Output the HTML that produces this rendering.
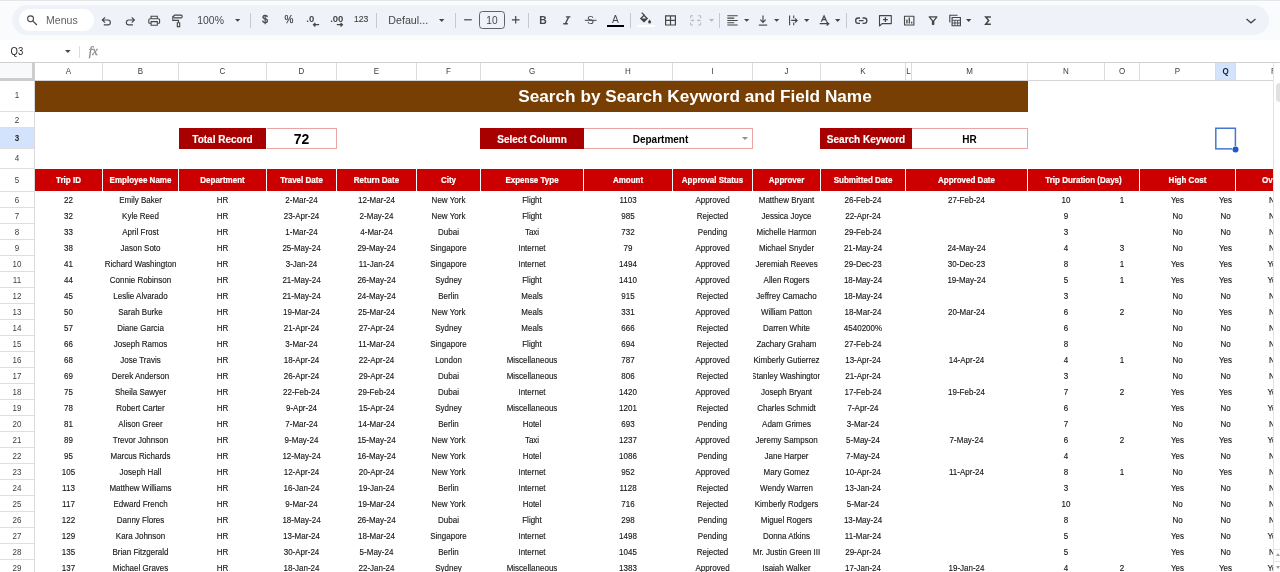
<!DOCTYPE html>
<html lang="en"><head><meta charset="utf-8"><title>Search by Search Keyword and Field Name</title>
<style>
html,body{margin:0;padding:0}
body{width:1280px;height:572px;overflow:hidden;position:relative;background:#fff;font-family:"Liberation Sans",Arial,sans-serif;color:#000}
.abs,.abs *{position:absolute}
#chrome{left:0;top:0;width:1280px;height:40px;background:#f9fbfd}
#topline{left:0;top:0;width:1280px;height:1px;background:#e4e6e9}
#tb{will-change:transform;left:12px;top:5px;width:1257px;height:30px;border-radius:15px;background:#eff3f9}
#menus{left:7px;top:4px;width:75px;height:22px;border-radius:11px;background:#fff}
.tt{font-size:10.5px;color:#444746;line-height:12px;white-space:nowrap}
.sep{width:1px;height:15px;top:8px;background:#c7c9cc}
svg{overflow:visible}
#fbar{will-change:transform;left:0;top:40px;width:1280px;height:22px;background:#fff}
#grid{will-change:transform;left:0;top:62px;width:1280px;height:510px;background:#fff;overflow:hidden}
.ch{top:1px;height:17px;font-size:8px;line-height:18px;color:#3c4043;text-align:center;border-right:1px solid #dcdcdc;background:#fff;box-sizing:content-box}
.rh span,.ch span{position:static;display:inline-block;transform:scaleY(1.1)}
.rh{left:0;width:34px;font-size:8px;color:#3c4043;text-align:center;border-bottom:1px solid #dedede;background:#fff}
.c{font-size:8px;line-height:16px;height:16px;text-align:center;white-space:nowrap;overflow:hidden;color:#161616;-webkit-text-stroke:0.12px #161616}
.c span{position:absolute;left:50%;top:0;transform:translateX(-50%) scaleY(1.12)}
.h{top:106.800px;height:22.600px;background:#cc0000;color:#fff;font-weight:bold;font-size:8px;line-height:23px;text-align:center;white-space:nowrap;overflow:hidden}
.h span{position:static;display:inline-block;transform:scaleY(1.14);-webkit-text-stroke:0.2px #fff}
.lab{top:65.600px;height:21.800px;background:#a80000;color:#fff;font-weight:bold;font-size:10px;line-height:23.800px;-webkit-text-stroke:0.150px #fff;text-align:center;white-space:nowrap}
.val{top:65.600px;height:19.800px;border:1px solid #eda3a3;border-left:none;background:#fff;color:#000;font-weight:bold;font-size:10px;line-height:21.800px;text-align:center;white-space:nowrap}
</style></head><body>

<div id="chrome" class="abs"><div id="topline"></div><div id="tb">
<div id="menus"></div>
<svg style="left:13.00px;top:9.00px" width="14.00" height="13.00" viewBox="25.00 14.00 14.00 13.00"><path d="M33.500 18.800a2.950 2.950 0 1 1 -5.900 0a2.950 2.950 0 1 1 5.900 0z" fill="none" stroke="#444746" stroke-width="1.05" /><path d="M32.700 20.900L36.900 25" fill="none" stroke="#444746" stroke-width="1.25" /></svg>
<div class="tt" style="left:34.00px;top:7.80px;line-height:14px;font-size:10.6px;font-weight:normal;color:#5f6368;">Menus</div>
<svg style="left:88.00px;top:10.00px" width="13.00" height="12.00" viewBox="100.00 15.00 13.00 12.00"><path d="M105 17.300L102.300 20L105 22.700M102.600 20H107.900a2.450 2.450 0 0 1 0 4.900H103.800" fill="none" stroke="#444746" stroke-width="1.15" /></svg>
<svg style="left:112.00px;top:10.00px" width="13.00" height="12.00" viewBox="124.00 15.00 13.00 12.00"><path d="M131.700 17.300L134.400 20L131.700 22.700M134.100 20H128.800a2.450 2.450 0 0 0 0 4.900H132.900" fill="none" stroke="#444746" stroke-width="1.15" /></svg>
<svg style="left:135.00px;top:9.00px" width="15.00" height="13.00" viewBox="147.00 14.00 15.00 13.00"><path d="M151.100 18.600V16.200H157.300V18.600" fill="none" stroke="#444746" stroke-width="1.1" /><path d="M150.900 23.300H149.600a0.800 0.800 0 0 1 -0.800 -0.800V19.900a1.200 1.200 0 0 1 1.200 -1.200H158.400a1.200 1.200 0 0 1 1.200 1.200V22.500a0.800 0.800 0 0 1 -0.800 0.800H157.500" fill="none" stroke="#444746" stroke-width="1.1" /><path d="M151.100 21.600H157.300V25.300H151.100z" fill="none" stroke="#444746" stroke-width="1.1" /></svg>
<svg style="left:159.00px;top:8.00px" width="14.00" height="16.00" viewBox="171.00 13.00 14.00 16.00"><path d="M174.600 15.100H181.200a0.900 0.900 0 0 1 0.900 0.900V17a0.900 0.900 0 0 1 -0.900 0.900H174.600a0.900 0.900 0 0 1 -0.900 -0.900V16a0.900 0.900 0 0 1 0.900 -0.900z" fill="none" stroke="#444746" stroke-width="1.1" /><path d="M173.700 16.500H172.800V20.400H178.500V22.600" fill="none" stroke="#444746" stroke-width="1.1" /><path d="M177.300 22.700H179.700V26.600H177.300z" fill="none" stroke="#444746" stroke-width="1.1" /></svg>
<div class="tt" style="left:185.30px;top:8.90px;line-height:14px;font-size:10.4px;font-weight:normal;color:#444746;">100%</div>
<svg style="left:222.60px;top:13.90px" width="5.30" height="2.95" viewBox="234.60 18.90 5.30 2.95"><path d="M234.6 18.9h5.300000000000011l-2.6500000000000057 2.850000000000006z" fill="#444746"/></svg>
<div class="sep" style="left:238.00px;top:7.5px"></div>
<div class="tt" style="left:203.10px;width:100px;text-align:center;top:7.60px;line-height:14px;font-size:10.4px;font-weight:normal;color:#444746;-webkit-text-stroke:0.4px #444746;">$</div>
<div class="tt" style="left:227.00px;width:100px;text-align:center;top:7.80px;line-height:14px;font-size:10px;font-weight:normal;color:#444746;-webkit-text-stroke:0.25px #444746;">%</div>
<div class="tt" style="left:294.30px;top:7.20px;line-height:14px;font-size:9.5px;font-weight:bold;color:#444746;">.0</div>
<svg style="left:300.00px;top:17.00px" width="8.00" height="5.00" viewBox="312.00 22.00 8.00 5.00"><path d="M319.100 24.700H313.600M315.400 22.900L313.500 24.700L315.400 26.500" fill="none" stroke="#444746" stroke-width="1.25" /></svg>
<div class="tt" style="left:318.20px;top:7.20px;line-height:14px;font-size:9.5px;font-weight:bold;color:#444746;">.00</div>
<svg style="left:324.00px;top:17.00px" width="8.00" height="5.00" viewBox="336.00 22.00 8.00 5.00"><path d="M336.800 24.700H342.300M340.500 22.900L342.400 24.700L340.500 26.500" fill="none" stroke="#444746" stroke-width="1.25" /></svg>
<div class="tt" style="left:299.20px;width:100px;text-align:center;top:7.40px;line-height:14px;font-size:8.6px;font-weight:normal;color:#444746;-webkit-text-stroke:0.15px #444746;">123</div>
<div class="sep" style="left:363.80px;top:7.5px"></div>
<div class="tt" style="left:376.30px;top:7.80px;line-height:14px;font-size:10.7px;font-weight:normal;color:#444746;">Defaul...</div>
<svg style="left:426.90px;top:13.60px" width="5.40" height="3.00" viewBox="438.90 18.60 5.40 3.00"><path d="M438.9 18.6h5.400000000000034l-2.700000000000017 2.9000000000000172z" fill="#444746"/></svg>
<div class="sep" style="left:443.10px;top:7.5px"></div>
<svg style="left:451.00px;top:13.00px" width="10.00" height="4.00" viewBox="463.00 18.00 10.00 4.00"><path d="M464.100 19.800H471.800" fill="none" stroke="#444746" stroke-width="1.2" /></svg>
<div style="left:467.20px;top:6.30px;width:25.6px;height:18px;border:1px solid #5f6368;border-radius:3.5px;box-sizing:border-box"></div>
<div class="tt" style="left:429.90px;width:100px;text-align:center;top:8.50px;line-height:14px;font-size:10.2px;font-weight:normal;color:#444746;">10</div>
<svg style="left:498.00px;top:10.00px" width="11.00" height="10.00" viewBox="510.00 15.00 11.00 10.00"><path d="M511.900 19.800H519.500M515.700 16V23.600" fill="none" stroke="#444746" stroke-width="1.2" /></svg>
<div class="sep" style="left:516.00px;top:7.5px"></div>
<div class="tt" style="left:480.90px;width:100px;text-align:center;top:8.60px;line-height:14px;font-size:10.4px;font-weight:bold;color:#444746;">B</div>
<svg style="left:550.00px;top:10.00px" width="10.00" height="11.00" viewBox="562.00 15.00 10.00 11.00"><path d="M565.900 16.900H570.400M563.300 23.700H567.800M568.700 16.900L565.400 23.700" fill="none" stroke="#444746" stroke-width="1.35" /></svg>
<div class="tt" style="left:528.60px;width:100px;text-align:center;top:8.20px;line-height:14px;font-size:10.5px;font-weight:normal;color:#444746;">S</div>
<svg style="left:572.00px;top:14.00px" width="14.00" height="3.00" viewBox="584.00 19.00 14.00 3.00"><path d="M584.800 20.300H596.500" fill="none" stroke="#444746" stroke-width="1.0" /></svg>
<div class="tt" style="left:553.30px;width:100px;text-align:center;top:7.70px;line-height:14px;font-size:10.2px;font-weight:normal;color:#444746;">A</div>
<div style="left:595.00px;top:19.60px;width:16.5px;height:2.4px;background:#000"></div>
<div class="sep" style="left:617.90px;top:7.5px"></div>
<svg style="left:626.00px;top:6.00px" width="18.00" height="13.00" viewBox="638.00 11.00 18.00 13.00"><path d="M644 14.500L648.100 18.600L644.600 22.100a0.850 0.850 0 0 1 -1.200 0L639.900 18.600z" fill="#444746"/><path d="M644 16.300L646.100 18.400H641.900z" fill="#eff3f9"/><path d="M641.700 12.600L644.600 15.500" fill="none" stroke="#444746" stroke-width="1.2" /><path d="M649.600 19.500c0.900 1.100 1.500 1.900 1.500 2.500a1.500 1.500 0 0 1 -3 0c0 -0.600 0.600 -1.400 1.500 -2.500z" fill="#444746"/></svg>
<div style="left:625.00px;top:19.70px;width:18px;height:2.1px;background:#fff"></div>
<svg style="left:652.00px;top:9.00px" width="14.00" height="13.00" viewBox="664.00 14.00 14.00 13.00"><path d="M665.600 15.850H675.400V25H665.600zM670.500 15.850V25M665.600 20.400H675.400" fill="none" stroke="#444746" stroke-width="1.2" /></svg>
<svg style="left:677.00px;top:9.00px" width="14.00" height="13.00" viewBox="689.00 14.00 14.00 13.00"><path d="M693 15.800H690.600V18.300M698.300 15.800H700.700V18.300M693 25H690.600V22.500M698.300 25H700.700V22.500" fill="none" stroke="#b4b7ba" stroke-width="1.0" /><path d="M690.600 20.400H693.800M692.600 19.200L693.800 20.400L692.600 21.600M700.700 20.400H697.500M698.700 19.200L697.500 20.400L698.700 21.600" fill="none" stroke="#b4b7ba" stroke-width="0.9" /></svg>
<svg style="left:696.80px;top:13.70px" width="5.20" height="2.90" viewBox="708.80 18.70 5.20 2.90"><path d="M708.8 18.7h5.2000000000000455l-2.6000000000000227 2.800000000000023z" fill="#b4b7ba"/></svg>
<div class="sep" style="left:706.90px;top:7.5px"></div>
<svg style="left:714.00px;top:9.00px" width="13.00" height="13.00" viewBox="726.00 14.00 13.00 13.00"><path d="M727.300 15.800H737.700M727.300 18.100H734.300M727.300 20.400H737.700M727.300 22.700H734.300M727.300 25H737.700" fill="none" stroke="#444746" stroke-width="1.05" /></svg>
<svg style="left:731.50px;top:13.70px" width="5.30" height="2.95" viewBox="743.50 18.70 5.30 2.95"><path d="M743.5 18.7h5.2999999999999545l-2.6499999999999773 2.8499999999999774z" fill="#444746"/></svg>
<svg style="left:745.00px;top:9.00px" width="12.00" height="13.00" viewBox="757.00 14.00 12.00 13.00"><path d="M763 15.400V22.200M760.300 19.700L763 22.400L765.700 19.700" fill="none" stroke="#444746" stroke-width="1.15" /><path d="M758.800 25.100H767.200" fill="none" stroke="#444746" stroke-width="1.15" /></svg>
<svg style="left:761.50px;top:13.70px" width="5.30" height="2.95" viewBox="773.50 18.70 5.30 2.95"><path d="M773.5 18.7h5.2999999999999545l-2.6499999999999773 2.8499999999999774z" fill="#444746"/></svg>
<svg style="left:776.00px;top:9.00px" width="11.00" height="13.00" viewBox="788.00 14.00 11.00 13.00"><path d="M789.600 15.600V25.200M793.700 15.600V18.200M793.700 22.600V25.200" fill="none" stroke="#444746" stroke-width="1.1" /><path d="M791.200 20.400H797M795 18.300L797.200 20.400L795 22.500" fill="none" stroke="#444746" stroke-width="1.1" /></svg>
<svg style="left:792.00px;top:13.70px" width="5.40" height="3.00" viewBox="804.00 18.70 5.40 3.00"><path d="M804 18.7h5.399999999999977l-2.6999999999999886 2.899999999999989z" fill="#444746"/></svg>
<svg style="left:807.00px;top:9.00px" width="11.00" height="9.00" viewBox="819.00 14.00 11.00 9.00"><path d="M821.300 21.700L824.050 15.900L826.800 21.700M822.400 19.700H825.700" fill="none" stroke="#444746" stroke-width="1.2" stroke-linejoin="miter"/></svg>
<svg style="left:806.00px;top:17.00px" width="13.00" height="5.00" viewBox="818.00 22.00 13.00 5.00"><path d="M819.700 23.600H828.400M826.700 22L828.700 23.800L826.700 25.500" fill="none" stroke="#444746" stroke-width="1.25" /></svg>
<svg style="left:823.20px;top:13.70px" width="5.40" height="3.00" viewBox="835.20 18.70 5.40 3.00"><path d="M835.2 18.7h5.399999999999977l-2.6999999999999886 2.899999999999989z" fill="#444746"/></svg>
<div class="sep" style="left:834.40px;top:7.5px"></div>
<svg style="left:842.00px;top:11.00px" width="15.00" height="9.00" viewBox="854.00 16.00 15.00 9.00"><path d="M860 18H858.300a2.650 2.650 0 0 0 0 5.300H860M862.500 18H864.200a2.650 2.650 0 0 1 0 5.300H862.500M858.900 20.650H863.600" fill="none" stroke="#444746" stroke-width="1.3" /></svg>
<svg style="left:866.00px;top:9.00px" width="15.00" height="14.00" viewBox="878.00 14.00 15.00 14.00"><path d="M879.500 15.600H891.300V23.600H882.100L879.500 26V15.600z" fill="none" stroke="#444746" stroke-width="1.1" stroke-linejoin="round"/><path d="M885.400 17.300V22M883 19.650H887.800" fill="none" stroke="#444746" stroke-width="1.3" /></svg>
<svg style="left:891.00px;top:10.00px" width="13.00" height="12.00" viewBox="903.00 15.00 13.00 12.00"><path d="M904.500 16.250H913.900V25H904.500z" fill="none" stroke="#444746" stroke-width="1.1" stroke-linejoin="round"/><path d="M906.900 23.500V19.600M909.300 23.500V17.500M911.700 23.500V21.800" fill="none" stroke="#444746" stroke-width="1.3" /></svg>
<svg style="left:915.00px;top:10.00px" width="12.00" height="11.00" viewBox="927.00 15.00 12.00 11.00"><path d="M929.300 16.800H936.900L933.700 20.800V24.300H932.500V20.800L929.300 16.800z" fill="none" stroke="#444746" stroke-width="1.3" stroke-linejoin="round"/></svg>
<svg style="left:936.00px;top:8.00px" width="15.00" height="15.00" viewBox="948.00 13.00 15.00 15.00"><path d="M949.800 22.600V15.200H957.600" fill="none" stroke="#444746" stroke-width="1.1" /><path d="M952.100 17.500H960.400V25.700H952.100z" fill="none" stroke="#444746" stroke-width="1.15" /><path d="M952.100 20.300H960.400M952.100 23H960.400M954.900 20.300V25.700M957.700 20.300V25.700" fill="none" stroke="#444746" stroke-width="0.9" /></svg>
<svg style="left:954.40px;top:13.70px" width="5.40" height="3.00" viewBox="966.40 18.70 5.40 3.00"><path d="M966.4 18.7h5.399999999999977l-2.6999999999999886 2.899999999999989z" fill="#444746"/></svg>
<svg style="left:971.00px;top:10.00px" width="10.00" height="11.00" viewBox="983.00 15.00 10.00 11.00"><path d="M990.900 17H985.700L988.700 20.600L985.700 24.200H990.900" fill="none" stroke="#444746" stroke-width="1.5" stroke-linejoin="miter"/></svg>
<svg style="left:1233.00px;top:12.00px" width="13.00" height="8.00" viewBox="1245.00 17.00 13.00 8.00"><path d="M1246.500 19L1251 22.800L1255.500 19" fill="none" stroke="#444746" stroke-width="1.3" /></svg>
</div></div>
<div id="fbar" class="abs">
<div style="left:10.500px;top:6.100px;font-size:9.500px;line-height:12px;color:#202124;transform:scaleY(1.13);transform-origin:50% 50%">Q3</div>
<svg style="left:64.900px;top:10.300px" width="5.600" height="3" viewBox="0 0 5.600 3"><path d="M0 0h5.600L2.800 3z" fill="#444746"/></svg>
<div style="left:79px;top:6px;width:1px;height:12px;background:#dadce0"></div>
<div style="left:88.700px;top:3.900px;font-family:'Liberation Serif',serif;font-style:italic;font-size:12.500px;line-height:15px;color:#858a8f;letter-spacing:0.200px;-webkit-text-stroke:0.300px #858a8f">fx</div>
</div>
<div id="grid" class="abs">
<div style="left:0;top:0;width:1280px;height:1px;background:#d0d0d0"></div>
<div class="ch" style="left:35px;width:67px;"><span>A</span></div>
<div class="ch" style="left:103px;width:75px;"><span>B</span></div>
<div class="ch" style="left:179px;width:87px;"><span>C</span></div>
<div class="ch" style="left:267px;width:69px;"><span>D</span></div>
<div class="ch" style="left:337px;width:79px;"><span>E</span></div>
<div class="ch" style="left:417px;width:63px;"><span>F</span></div>
<div class="ch" style="left:481px;width:102px;"><span>G</span></div>
<div class="ch" style="left:584px;width:88px;"><span>H</span></div>
<div class="ch" style="left:673px;width:79px;"><span>I</span></div>
<div class="ch" style="left:753px;width:67px;"><span>J</span></div>
<div class="ch" style="left:821px;width:84px;"><span>K</span></div>
<div class="ch" style="left:906px;width:5px;"><span>L</span></div>
<div class="ch" style="left:912px;width:115px;"><span>M</span></div>
<div class="ch" style="left:1028px;width:76px;"><span>N</span></div>
<div class="ch" style="left:1105px;width:34px;"><span>O</span></div>
<div class="ch" style="left:1140px;width:75px;"><span>P</span></div>
<div class="ch" style="left:1216px;width:19px;background:#d3e3fd;color:#1f1f1f;font-weight:bold;"><span>Q</span></div>
<div class="ch" style="left:1236px;width:76px;"><span>R</span></div>
<div style="left:0;top:18px;width:1280px;height:1px;background:#d5d5d5"></div>
<div style="left:0;top:1px;width:32px;height:15px;background:#f8f9fa;border-right:3px solid #cdcdcd;border-bottom:3px solid #cdcdcd"></div>
<div class="rh" style="top:19px;height:30px;"><span style="position:absolute;left:0;width:34px;top:9.0px;line-height:12px;height:12px">1</span></div>
<div class="rh" style="top:50px;height:15px;"><span style="position:absolute;left:0;width:34px;top:2.5px;line-height:12px;height:12px">2</span></div>
<div class="rh" style="top:66px;height:20px;background:#d3e3fd;color:#1f1f1f;font-weight:bold;"><span style="position:absolute;left:0;width:34px;top:5.0px;line-height:12px;height:12px">3</span></div>
<div class="rh" style="top:87px;height:19px;"><span style="position:absolute;left:0;width:34px;top:3.5px;line-height:12px;height:12px">4</span></div>
<div class="rh" style="top:107px;height:22px;"><span style="position:absolute;left:0;width:34px;top:6.0px;line-height:12px;height:12px">5</span></div>
<div class="rh" style="top:130px;height:15px;border-bottom:none;"><span style="position:absolute;left:0;width:34px;top:2.5px;line-height:12px;height:12px">6</span></div>
<div class="rh" style="top:146px;height:15px;border-bottom:none;"><span style="position:absolute;left:0;width:34px;top:2.5px;line-height:12px;height:12px">7</span></div>
<div class="rh" style="top:162px;height:15px;border-bottom:none;"><span style="position:absolute;left:0;width:34px;top:2.5px;line-height:12px;height:12px">8</span></div>
<div class="rh" style="top:178px;height:15px;border-bottom:none;"><span style="position:absolute;left:0;width:34px;top:2.5px;line-height:12px;height:12px">9</span></div>
<div class="rh" style="top:194px;height:15px;border-bottom:none;"><span style="position:absolute;left:0;width:34px;top:2.5px;line-height:12px;height:12px">10</span></div>
<div class="rh" style="top:210px;height:15px;border-bottom:none;"><span style="position:absolute;left:0;width:34px;top:2.5px;line-height:12px;height:12px">11</span></div>
<div class="rh" style="top:226px;height:15px;border-bottom:none;"><span style="position:absolute;left:0;width:34px;top:2.5px;line-height:12px;height:12px">12</span></div>
<div class="rh" style="top:242px;height:15px;border-bottom:none;"><span style="position:absolute;left:0;width:34px;top:2.5px;line-height:12px;height:12px">13</span></div>
<div class="rh" style="top:258px;height:15px;border-bottom:none;"><span style="position:absolute;left:0;width:34px;top:2.5px;line-height:12px;height:12px">14</span></div>
<div class="rh" style="top:274px;height:15px;border-bottom:none;"><span style="position:absolute;left:0;width:34px;top:2.5px;line-height:12px;height:12px">15</span></div>
<div class="rh" style="top:290px;height:15px;border-bottom:none;"><span style="position:absolute;left:0;width:34px;top:2.5px;line-height:12px;height:12px">16</span></div>
<div class="rh" style="top:306px;height:15px;border-bottom:none;"><span style="position:absolute;left:0;width:34px;top:2.5px;line-height:12px;height:12px">17</span></div>
<div class="rh" style="top:322px;height:15px;border-bottom:none;"><span style="position:absolute;left:0;width:34px;top:2.5px;line-height:12px;height:12px">18</span></div>
<div class="rh" style="top:338px;height:15px;border-bottom:none;"><span style="position:absolute;left:0;width:34px;top:2.5px;line-height:12px;height:12px">19</span></div>
<div class="rh" style="top:354px;height:15px;border-bottom:none;"><span style="position:absolute;left:0;width:34px;top:2.5px;line-height:12px;height:12px">20</span></div>
<div class="rh" style="top:370px;height:15px;border-bottom:none;"><span style="position:absolute;left:0;width:34px;top:2.5px;line-height:12px;height:12px">21</span></div>
<div class="rh" style="top:386px;height:15px;border-bottom:none;"><span style="position:absolute;left:0;width:34px;top:2.5px;line-height:12px;height:12px">22</span></div>
<div class="rh" style="top:402px;height:15px;border-bottom:none;"><span style="position:absolute;left:0;width:34px;top:2.5px;line-height:12px;height:12px">23</span></div>
<div class="rh" style="top:418px;height:15px;border-bottom:none;"><span style="position:absolute;left:0;width:34px;top:2.5px;line-height:12px;height:12px">24</span></div>
<div class="rh" style="top:434px;height:15px;border-bottom:none;"><span style="position:absolute;left:0;width:34px;top:2.5px;line-height:12px;height:12px">25</span></div>
<div class="rh" style="top:450px;height:15px;border-bottom:none;"><span style="position:absolute;left:0;width:34px;top:2.5px;line-height:12px;height:12px">26</span></div>
<div class="rh" style="top:466px;height:15px;border-bottom:none;"><span style="position:absolute;left:0;width:34px;top:2.5px;line-height:12px;height:12px">27</span></div>
<div class="rh" style="top:482px;height:15px;border-bottom:none;"><span style="position:absolute;left:0;width:34px;top:2.5px;line-height:12px;height:12px">28</span></div>
<div class="rh" style="top:498px;height:15px;border-bottom:none;"><span style="position:absolute;left:0;width:34px;top:2.5px;line-height:12px;height:12px">29</span></div>
<div style="left:0;top:145px;width:34px;height:1px;background:#dedede"></div>
<div style="left:0;top:161px;width:34px;height:1px;background:#dedede"></div>
<div style="left:0;top:177px;width:34px;height:1px;background:#dedede"></div>
<div style="left:0;top:193px;width:34px;height:1px;background:#dedede"></div>
<div style="left:0;top:209px;width:34px;height:1px;background:#dedede"></div>
<div style="left:0;top:225px;width:34px;height:1px;background:#dedede"></div>
<div style="left:0;top:241px;width:34px;height:1px;background:#dedede"></div>
<div style="left:0;top:257px;width:34px;height:1px;background:#dedede"></div>
<div style="left:0;top:273px;width:34px;height:1px;background:#dedede"></div>
<div style="left:0;top:289px;width:34px;height:1px;background:#dedede"></div>
<div style="left:0;top:305px;width:34px;height:1px;background:#dedede"></div>
<div style="left:0;top:321px;width:34px;height:1px;background:#dedede"></div>
<div style="left:0;top:337px;width:34px;height:1px;background:#dedede"></div>
<div style="left:0;top:353px;width:34px;height:1px;background:#dedede"></div>
<div style="left:0;top:369px;width:34px;height:1px;background:#dedede"></div>
<div style="left:0;top:385px;width:34px;height:1px;background:#dedede"></div>
<div style="left:0;top:401px;width:34px;height:1px;background:#dedede"></div>
<div style="left:0;top:417px;width:34px;height:1px;background:#dedede"></div>
<div style="left:0;top:433px;width:34px;height:1px;background:#dedede"></div>
<div style="left:0;top:449px;width:34px;height:1px;background:#dedede"></div>
<div style="left:0;top:465px;width:34px;height:1px;background:#dedede"></div>
<div style="left:0;top:481px;width:34px;height:1px;background:#dedede"></div>
<div style="left:0;top:497px;width:34px;height:1px;background:#dedede"></div>
<div style="left:0;top:513px;width:34px;height:1px;background:#dedede"></div>
<div style="left:34px;top:19px;width:1px;height:500px;background:#d9d9d9"></div>
<div style="left:35px;top:19px;width:993px;height:31px;background:#783f04"></div>
<div style="left:395px;top:19px;width:600px;height:31px;line-height:31px;text-align:center;color:#fff;font-weight:bold;font-size:17.2px;white-space:nowrap">Search by Search Keyword and Field Name</div>
<div class="lab" style="left:178.7px;width:87.6px">Total Record</div>
<div class="val" style="left:267px;width:69px;font-size:14px;">72</div>
<div class="lab" style="left:480.1px;width:103.9px">Select Column</div>
<div class="val" style="left:584px;width:168px;"><span style="left:0;width:153px;top:0">Department</span><svg style="left:158px;top:8px" width="6" height="3" viewBox="0 0 6 3"><path d="M0 0h6L3 3z" fill="#8a8d91"/></svg></div>
<div class="lab" style="left:820.2px;width:91.7px">Search Keyword</div>
<div class="val" style="left:912px;width:115px;">HR</div>
<div class="h" style="left:35px;width:67px"><span>Trip ID</span></div>
<div class="h" style="left:103px;width:75px"><span>Employee Name</span></div>
<div class="h" style="left:179px;width:87px"><span>Department</span></div>
<div class="h" style="left:267px;width:69px"><span>Travel Date</span></div>
<div class="h" style="left:337px;width:79px"><span>Return Date</span></div>
<div class="h" style="left:417px;width:63px"><span>City</span></div>
<div class="h" style="left:481px;width:102px"><span>Expense Type</span></div>
<div class="h" style="left:584px;width:88px"><span>Amount</span></div>
<div class="h" style="left:673px;width:79px"><span>Approval Status</span></div>
<div class="h" style="left:753px;width:67px"><span>Approver</span></div>
<div class="h" style="left:821px;width:84px"><span>Submitted Date</span></div>
<div class="h" style="left:906px;width:121px"><span>Approved Date</span></div>
<div class="h" style="left:1028px;width:111px"><span>Trip Duration (Days)</span></div>
<div class="h" style="left:1140px;width:95px"><span>High Cost</span></div>
<div class="h" style="left:1236px;width:80px;text-align:left"><span style="position:absolute;left:26px;top:0">Over Budget</span></div>
<div class="c" style="left:35px;top:130.5px;width:67px"><span>22</span></div>
<div class="c" style="left:103px;top:130.5px;width:75px"><span>Emily Baker</span></div>
<div class="c" style="left:179px;top:130.5px;width:87px"><span>HR</span></div>
<div class="c" style="left:267px;top:130.5px;width:69px"><span>2-Mar-24</span></div>
<div class="c" style="left:337px;top:130.5px;width:79px"><span>12-Mar-24</span></div>
<div class="c" style="left:417px;top:130.5px;width:63px"><span>New York</span></div>
<div class="c" style="left:481px;top:130.5px;width:102px"><span>Flight</span></div>
<div class="c" style="left:584px;top:130.5px;width:88px"><span>1103</span></div>
<div class="c" style="left:673px;top:130.5px;width:79px"><span>Approved</span></div>
<div class="c" style="left:753px;top:130.5px;width:67px"><span>Matthew Bryant</span></div>
<div class="c" style="left:821px;top:130.5px;width:84px"><span>26-Feb-24</span></div>
<div class="c" style="left:906px;top:130.5px;width:121px"><span>27-Feb-24</span></div>
<div class="c" style="left:1028px;top:130.5px;width:76px"><span>10</span></div>
<div class="c" style="left:1105px;top:130.5px;width:34px"><span>1</span></div>
<div class="c" style="left:1140px;top:130.5px;width:75px"><span>Yes</span></div>
<div class="c" style="left:1216px;top:130.5px;width:19px"><span>Yes</span></div>
<div class="c" style="left:1236px;top:130.5px;width:76px"><span>No</span></div>
<div class="c" style="left:35px;top:146.5px;width:67px"><span>32</span></div>
<div class="c" style="left:103px;top:146.5px;width:75px"><span>Kyle Reed</span></div>
<div class="c" style="left:179px;top:146.5px;width:87px"><span>HR</span></div>
<div class="c" style="left:267px;top:146.5px;width:69px"><span>23-Apr-24</span></div>
<div class="c" style="left:337px;top:146.5px;width:79px"><span>2-May-24</span></div>
<div class="c" style="left:417px;top:146.5px;width:63px"><span>New York</span></div>
<div class="c" style="left:481px;top:146.5px;width:102px"><span>Flight</span></div>
<div class="c" style="left:584px;top:146.5px;width:88px"><span>985</span></div>
<div class="c" style="left:673px;top:146.5px;width:79px"><span>Rejected</span></div>
<div class="c" style="left:753px;top:146.5px;width:67px"><span>Jessica Joyce</span></div>
<div class="c" style="left:821px;top:146.5px;width:84px"><span>22-Apr-24</span></div>
<div class="c" style="left:1028px;top:146.5px;width:76px"><span>9</span></div>
<div class="c" style="left:1140px;top:146.5px;width:75px"><span>No</span></div>
<div class="c" style="left:1216px;top:146.5px;width:19px"><span>No</span></div>
<div class="c" style="left:1236px;top:146.5px;width:76px"><span>No</span></div>
<div class="c" style="left:35px;top:162.5px;width:67px"><span>33</span></div>
<div class="c" style="left:103px;top:162.5px;width:75px"><span>April Frost</span></div>
<div class="c" style="left:179px;top:162.5px;width:87px"><span>HR</span></div>
<div class="c" style="left:267px;top:162.5px;width:69px"><span>1-Mar-24</span></div>
<div class="c" style="left:337px;top:162.5px;width:79px"><span>4-Mar-24</span></div>
<div class="c" style="left:417px;top:162.5px;width:63px"><span>Dubai</span></div>
<div class="c" style="left:481px;top:162.5px;width:102px"><span>Taxi</span></div>
<div class="c" style="left:584px;top:162.5px;width:88px"><span>732</span></div>
<div class="c" style="left:673px;top:162.5px;width:79px"><span>Pending</span></div>
<div class="c" style="left:753px;top:162.5px;width:67px"><span>Michelle Harmon</span></div>
<div class="c" style="left:821px;top:162.5px;width:84px"><span>29-Feb-24</span></div>
<div class="c" style="left:1028px;top:162.5px;width:76px"><span>3</span></div>
<div class="c" style="left:1140px;top:162.5px;width:75px"><span>No</span></div>
<div class="c" style="left:1216px;top:162.5px;width:19px"><span>No</span></div>
<div class="c" style="left:1236px;top:162.5px;width:76px"><span>No</span></div>
<div class="c" style="left:35px;top:178.5px;width:67px"><span>38</span></div>
<div class="c" style="left:103px;top:178.5px;width:75px"><span>Jason Soto</span></div>
<div class="c" style="left:179px;top:178.5px;width:87px"><span>HR</span></div>
<div class="c" style="left:267px;top:178.5px;width:69px"><span>25-May-24</span></div>
<div class="c" style="left:337px;top:178.5px;width:79px"><span>29-May-24</span></div>
<div class="c" style="left:417px;top:178.5px;width:63px"><span>Singapore</span></div>
<div class="c" style="left:481px;top:178.5px;width:102px"><span>Internet</span></div>
<div class="c" style="left:584px;top:178.5px;width:88px"><span>79</span></div>
<div class="c" style="left:673px;top:178.5px;width:79px"><span>Approved</span></div>
<div class="c" style="left:753px;top:178.5px;width:67px"><span>Michael Snyder</span></div>
<div class="c" style="left:821px;top:178.5px;width:84px"><span>21-May-24</span></div>
<div class="c" style="left:906px;top:178.5px;width:121px"><span>24-May-24</span></div>
<div class="c" style="left:1028px;top:178.5px;width:76px"><span>4</span></div>
<div class="c" style="left:1105px;top:178.5px;width:34px"><span>3</span></div>
<div class="c" style="left:1140px;top:178.5px;width:75px"><span>No</span></div>
<div class="c" style="left:1216px;top:178.5px;width:19px"><span>Yes</span></div>
<div class="c" style="left:1236px;top:178.5px;width:76px"><span>No</span></div>
<div class="c" style="left:35px;top:194.5px;width:67px"><span>41</span></div>
<div class="c" style="left:103px;top:194.5px;width:75px"><span>Richard Washington</span></div>
<div class="c" style="left:179px;top:194.5px;width:87px"><span>HR</span></div>
<div class="c" style="left:267px;top:194.5px;width:69px"><span>3-Jan-24</span></div>
<div class="c" style="left:337px;top:194.5px;width:79px"><span>11-Jan-24</span></div>
<div class="c" style="left:417px;top:194.5px;width:63px"><span>Singapore</span></div>
<div class="c" style="left:481px;top:194.5px;width:102px"><span>Internet</span></div>
<div class="c" style="left:584px;top:194.5px;width:88px"><span>1494</span></div>
<div class="c" style="left:673px;top:194.5px;width:79px"><span>Approved</span></div>
<div class="c" style="left:753px;top:194.5px;width:67px"><span>Jeremiah Reeves</span></div>
<div class="c" style="left:821px;top:194.5px;width:84px"><span>29-Dec-23</span></div>
<div class="c" style="left:906px;top:194.5px;width:121px"><span>30-Dec-23</span></div>
<div class="c" style="left:1028px;top:194.5px;width:76px"><span>8</span></div>
<div class="c" style="left:1105px;top:194.5px;width:34px"><span>1</span></div>
<div class="c" style="left:1140px;top:194.5px;width:75px"><span>Yes</span></div>
<div class="c" style="left:1216px;top:194.5px;width:19px"><span>Yes</span></div>
<div class="c" style="left:1236px;top:194.5px;width:76px"><span>Yes</span></div>
<div class="c" style="left:35px;top:210.5px;width:67px"><span>44</span></div>
<div class="c" style="left:103px;top:210.5px;width:75px"><span>Connie Robinson</span></div>
<div class="c" style="left:179px;top:210.5px;width:87px"><span>HR</span></div>
<div class="c" style="left:267px;top:210.5px;width:69px"><span>21-May-24</span></div>
<div class="c" style="left:337px;top:210.5px;width:79px"><span>26-May-24</span></div>
<div class="c" style="left:417px;top:210.5px;width:63px"><span>Sydney</span></div>
<div class="c" style="left:481px;top:210.5px;width:102px"><span>Flight</span></div>
<div class="c" style="left:584px;top:210.5px;width:88px"><span>1410</span></div>
<div class="c" style="left:673px;top:210.5px;width:79px"><span>Approved</span></div>
<div class="c" style="left:753px;top:210.5px;width:67px"><span>Allen Rogers</span></div>
<div class="c" style="left:821px;top:210.5px;width:84px"><span>18-May-24</span></div>
<div class="c" style="left:906px;top:210.5px;width:121px"><span>19-May-24</span></div>
<div class="c" style="left:1028px;top:210.5px;width:76px"><span>5</span></div>
<div class="c" style="left:1105px;top:210.5px;width:34px"><span>1</span></div>
<div class="c" style="left:1140px;top:210.5px;width:75px"><span>Yes</span></div>
<div class="c" style="left:1216px;top:210.5px;width:19px"><span>Yes</span></div>
<div class="c" style="left:1236px;top:210.5px;width:76px"><span>Yes</span></div>
<div class="c" style="left:35px;top:226.5px;width:67px"><span>45</span></div>
<div class="c" style="left:103px;top:226.5px;width:75px"><span>Leslie Alvarado</span></div>
<div class="c" style="left:179px;top:226.5px;width:87px"><span>HR</span></div>
<div class="c" style="left:267px;top:226.5px;width:69px"><span>21-May-24</span></div>
<div class="c" style="left:337px;top:226.5px;width:79px"><span>24-May-24</span></div>
<div class="c" style="left:417px;top:226.5px;width:63px"><span>Berlin</span></div>
<div class="c" style="left:481px;top:226.5px;width:102px"><span>Meals</span></div>
<div class="c" style="left:584px;top:226.5px;width:88px"><span>915</span></div>
<div class="c" style="left:673px;top:226.5px;width:79px"><span>Rejected</span></div>
<div class="c" style="left:753px;top:226.5px;width:67px"><span>Jeffrey Camacho</span></div>
<div class="c" style="left:821px;top:226.5px;width:84px"><span>18-May-24</span></div>
<div class="c" style="left:1028px;top:226.5px;width:76px"><span>3</span></div>
<div class="c" style="left:1140px;top:226.5px;width:75px"><span>No</span></div>
<div class="c" style="left:1216px;top:226.5px;width:19px"><span>No</span></div>
<div class="c" style="left:1236px;top:226.5px;width:76px"><span>No</span></div>
<div class="c" style="left:35px;top:242.5px;width:67px"><span>50</span></div>
<div class="c" style="left:103px;top:242.5px;width:75px"><span>Sarah Burke</span></div>
<div class="c" style="left:179px;top:242.5px;width:87px"><span>HR</span></div>
<div class="c" style="left:267px;top:242.5px;width:69px"><span>19-Mar-24</span></div>
<div class="c" style="left:337px;top:242.5px;width:79px"><span>25-Mar-24</span></div>
<div class="c" style="left:417px;top:242.5px;width:63px"><span>New York</span></div>
<div class="c" style="left:481px;top:242.5px;width:102px"><span>Meals</span></div>
<div class="c" style="left:584px;top:242.5px;width:88px"><span>331</span></div>
<div class="c" style="left:673px;top:242.5px;width:79px"><span>Approved</span></div>
<div class="c" style="left:753px;top:242.5px;width:67px"><span>William Patton</span></div>
<div class="c" style="left:821px;top:242.5px;width:84px"><span>18-Mar-24</span></div>
<div class="c" style="left:906px;top:242.5px;width:121px"><span>20-Mar-24</span></div>
<div class="c" style="left:1028px;top:242.5px;width:76px"><span>6</span></div>
<div class="c" style="left:1105px;top:242.5px;width:34px"><span>2</span></div>
<div class="c" style="left:1140px;top:242.5px;width:75px"><span>No</span></div>
<div class="c" style="left:1216px;top:242.5px;width:19px"><span>Yes</span></div>
<div class="c" style="left:1236px;top:242.5px;width:76px"><span>No</span></div>
<div class="c" style="left:35px;top:258.5px;width:67px"><span>57</span></div>
<div class="c" style="left:103px;top:258.5px;width:75px"><span>Diane Garcia</span></div>
<div class="c" style="left:179px;top:258.5px;width:87px"><span>HR</span></div>
<div class="c" style="left:267px;top:258.5px;width:69px"><span>21-Apr-24</span></div>
<div class="c" style="left:337px;top:258.5px;width:79px"><span>27-Apr-24</span></div>
<div class="c" style="left:417px;top:258.5px;width:63px"><span>Sydney</span></div>
<div class="c" style="left:481px;top:258.5px;width:102px"><span>Meals</span></div>
<div class="c" style="left:584px;top:258.5px;width:88px"><span>666</span></div>
<div class="c" style="left:673px;top:258.5px;width:79px"><span>Rejected</span></div>
<div class="c" style="left:753px;top:258.5px;width:67px"><span>Darren White</span></div>
<div class="c" style="left:821px;top:258.5px;width:84px"><span>4540200%</span></div>
<div class="c" style="left:1028px;top:258.5px;width:76px"><span>6</span></div>
<div class="c" style="left:1140px;top:258.5px;width:75px"><span>No</span></div>
<div class="c" style="left:1216px;top:258.5px;width:19px"><span>No</span></div>
<div class="c" style="left:1236px;top:258.5px;width:76px"><span>No</span></div>
<div class="c" style="left:35px;top:274.5px;width:67px"><span>66</span></div>
<div class="c" style="left:103px;top:274.5px;width:75px"><span>Joseph Ramos</span></div>
<div class="c" style="left:179px;top:274.5px;width:87px"><span>HR</span></div>
<div class="c" style="left:267px;top:274.5px;width:69px"><span>3-Mar-24</span></div>
<div class="c" style="left:337px;top:274.5px;width:79px"><span>11-Mar-24</span></div>
<div class="c" style="left:417px;top:274.5px;width:63px"><span>Singapore</span></div>
<div class="c" style="left:481px;top:274.5px;width:102px"><span>Flight</span></div>
<div class="c" style="left:584px;top:274.5px;width:88px"><span>694</span></div>
<div class="c" style="left:673px;top:274.5px;width:79px"><span>Rejected</span></div>
<div class="c" style="left:753px;top:274.5px;width:67px"><span>Zachary Graham</span></div>
<div class="c" style="left:821px;top:274.5px;width:84px"><span>27-Feb-24</span></div>
<div class="c" style="left:1028px;top:274.5px;width:76px"><span>8</span></div>
<div class="c" style="left:1140px;top:274.5px;width:75px"><span>No</span></div>
<div class="c" style="left:1216px;top:274.5px;width:19px"><span>No</span></div>
<div class="c" style="left:1236px;top:274.5px;width:76px"><span>No</span></div>
<div class="c" style="left:35px;top:290.5px;width:67px"><span>68</span></div>
<div class="c" style="left:103px;top:290.5px;width:75px"><span>Jose Travis</span></div>
<div class="c" style="left:179px;top:290.5px;width:87px"><span>HR</span></div>
<div class="c" style="left:267px;top:290.5px;width:69px"><span>18-Apr-24</span></div>
<div class="c" style="left:337px;top:290.5px;width:79px"><span>22-Apr-24</span></div>
<div class="c" style="left:417px;top:290.5px;width:63px"><span>London</span></div>
<div class="c" style="left:481px;top:290.5px;width:102px"><span>Miscellaneous</span></div>
<div class="c" style="left:584px;top:290.5px;width:88px"><span>787</span></div>
<div class="c" style="left:673px;top:290.5px;width:79px"><span>Approved</span></div>
<div class="c" style="left:753px;top:290.5px;width:67px"><span>Kimberly Gutierrez</span></div>
<div class="c" style="left:821px;top:290.5px;width:84px"><span>13-Apr-24</span></div>
<div class="c" style="left:906px;top:290.5px;width:121px"><span>14-Apr-24</span></div>
<div class="c" style="left:1028px;top:290.5px;width:76px"><span>4</span></div>
<div class="c" style="left:1105px;top:290.5px;width:34px"><span>1</span></div>
<div class="c" style="left:1140px;top:290.5px;width:75px"><span>No</span></div>
<div class="c" style="left:1216px;top:290.5px;width:19px"><span>Yes</span></div>
<div class="c" style="left:1236px;top:290.5px;width:76px"><span>No</span></div>
<div class="c" style="left:35px;top:306.5px;width:67px"><span>69</span></div>
<div class="c" style="left:103px;top:306.5px;width:75px"><span>Derek Anderson</span></div>
<div class="c" style="left:179px;top:306.5px;width:87px"><span>HR</span></div>
<div class="c" style="left:267px;top:306.5px;width:69px"><span>26-Apr-24</span></div>
<div class="c" style="left:337px;top:306.5px;width:79px"><span>29-Apr-24</span></div>
<div class="c" style="left:417px;top:306.5px;width:63px"><span>Dubai</span></div>
<div class="c" style="left:481px;top:306.5px;width:102px"><span>Miscellaneous</span></div>
<div class="c" style="left:584px;top:306.5px;width:88px"><span>806</span></div>
<div class="c" style="left:673px;top:306.5px;width:79px"><span>Rejected</span></div>
<div class="c" style="left:753px;top:306.5px;width:67px"><span>Stanley Washington</span></div>
<div class="c" style="left:821px;top:306.5px;width:84px"><span>21-Apr-24</span></div>
<div class="c" style="left:1028px;top:306.5px;width:76px"><span>3</span></div>
<div class="c" style="left:1140px;top:306.5px;width:75px"><span>No</span></div>
<div class="c" style="left:1216px;top:306.5px;width:19px"><span>No</span></div>
<div class="c" style="left:1236px;top:306.5px;width:76px"><span>No</span></div>
<div class="c" style="left:35px;top:322.5px;width:67px"><span>75</span></div>
<div class="c" style="left:103px;top:322.5px;width:75px"><span>Sheila Sawyer</span></div>
<div class="c" style="left:179px;top:322.5px;width:87px"><span>HR</span></div>
<div class="c" style="left:267px;top:322.5px;width:69px"><span>22-Feb-24</span></div>
<div class="c" style="left:337px;top:322.5px;width:79px"><span>29-Feb-24</span></div>
<div class="c" style="left:417px;top:322.5px;width:63px"><span>Dubai</span></div>
<div class="c" style="left:481px;top:322.5px;width:102px"><span>Internet</span></div>
<div class="c" style="left:584px;top:322.5px;width:88px"><span>1420</span></div>
<div class="c" style="left:673px;top:322.5px;width:79px"><span>Approved</span></div>
<div class="c" style="left:753px;top:322.5px;width:67px"><span>Joseph Bryant</span></div>
<div class="c" style="left:821px;top:322.5px;width:84px"><span>17-Feb-24</span></div>
<div class="c" style="left:906px;top:322.5px;width:121px"><span>19-Feb-24</span></div>
<div class="c" style="left:1028px;top:322.5px;width:76px"><span>7</span></div>
<div class="c" style="left:1105px;top:322.5px;width:34px"><span>2</span></div>
<div class="c" style="left:1140px;top:322.5px;width:75px"><span>Yes</span></div>
<div class="c" style="left:1216px;top:322.5px;width:19px"><span>Yes</span></div>
<div class="c" style="left:1236px;top:322.5px;width:76px"><span>Yes</span></div>
<div class="c" style="left:35px;top:338.5px;width:67px"><span>78</span></div>
<div class="c" style="left:103px;top:338.5px;width:75px"><span>Robert Carter</span></div>
<div class="c" style="left:179px;top:338.5px;width:87px"><span>HR</span></div>
<div class="c" style="left:267px;top:338.5px;width:69px"><span>9-Apr-24</span></div>
<div class="c" style="left:337px;top:338.5px;width:79px"><span>15-Apr-24</span></div>
<div class="c" style="left:417px;top:338.5px;width:63px"><span>Sydney</span></div>
<div class="c" style="left:481px;top:338.5px;width:102px"><span>Miscellaneous</span></div>
<div class="c" style="left:584px;top:338.5px;width:88px"><span>1201</span></div>
<div class="c" style="left:673px;top:338.5px;width:79px"><span>Rejected</span></div>
<div class="c" style="left:753px;top:338.5px;width:67px"><span>Charles Schmidt</span></div>
<div class="c" style="left:821px;top:338.5px;width:84px"><span>7-Apr-24</span></div>
<div class="c" style="left:1028px;top:338.5px;width:76px"><span>6</span></div>
<div class="c" style="left:1140px;top:338.5px;width:75px"><span>Yes</span></div>
<div class="c" style="left:1216px;top:338.5px;width:19px"><span>No</span></div>
<div class="c" style="left:1236px;top:338.5px;width:76px"><span>Yes</span></div>
<div class="c" style="left:35px;top:354.5px;width:67px"><span>81</span></div>
<div class="c" style="left:103px;top:354.5px;width:75px"><span>Alison Greer</span></div>
<div class="c" style="left:179px;top:354.5px;width:87px"><span>HR</span></div>
<div class="c" style="left:267px;top:354.5px;width:69px"><span>7-Mar-24</span></div>
<div class="c" style="left:337px;top:354.5px;width:79px"><span>14-Mar-24</span></div>
<div class="c" style="left:417px;top:354.5px;width:63px"><span>Berlin</span></div>
<div class="c" style="left:481px;top:354.5px;width:102px"><span>Hotel</span></div>
<div class="c" style="left:584px;top:354.5px;width:88px"><span>693</span></div>
<div class="c" style="left:673px;top:354.5px;width:79px"><span>Pending</span></div>
<div class="c" style="left:753px;top:354.5px;width:67px"><span>Adam Grimes</span></div>
<div class="c" style="left:821px;top:354.5px;width:84px"><span>3-Mar-24</span></div>
<div class="c" style="left:1028px;top:354.5px;width:76px"><span>7</span></div>
<div class="c" style="left:1140px;top:354.5px;width:75px"><span>No</span></div>
<div class="c" style="left:1216px;top:354.5px;width:19px"><span>No</span></div>
<div class="c" style="left:1236px;top:354.5px;width:76px"><span>No</span></div>
<div class="c" style="left:35px;top:370.5px;width:67px"><span>89</span></div>
<div class="c" style="left:103px;top:370.5px;width:75px"><span>Trevor Johnson</span></div>
<div class="c" style="left:179px;top:370.5px;width:87px"><span>HR</span></div>
<div class="c" style="left:267px;top:370.5px;width:69px"><span>9-May-24</span></div>
<div class="c" style="left:337px;top:370.5px;width:79px"><span>15-May-24</span></div>
<div class="c" style="left:417px;top:370.5px;width:63px"><span>New York</span></div>
<div class="c" style="left:481px;top:370.5px;width:102px"><span>Taxi</span></div>
<div class="c" style="left:584px;top:370.5px;width:88px"><span>1237</span></div>
<div class="c" style="left:673px;top:370.5px;width:79px"><span>Approved</span></div>
<div class="c" style="left:753px;top:370.5px;width:67px"><span>Jeremy Sampson</span></div>
<div class="c" style="left:821px;top:370.5px;width:84px"><span>5-May-24</span></div>
<div class="c" style="left:906px;top:370.5px;width:121px"><span>7-May-24</span></div>
<div class="c" style="left:1028px;top:370.5px;width:76px"><span>6</span></div>
<div class="c" style="left:1105px;top:370.5px;width:34px"><span>2</span></div>
<div class="c" style="left:1140px;top:370.5px;width:75px"><span>Yes</span></div>
<div class="c" style="left:1216px;top:370.5px;width:19px"><span>Yes</span></div>
<div class="c" style="left:1236px;top:370.5px;width:76px"><span>Yes</span></div>
<div class="c" style="left:35px;top:386.5px;width:67px"><span>95</span></div>
<div class="c" style="left:103px;top:386.5px;width:75px"><span>Marcus Richards</span></div>
<div class="c" style="left:179px;top:386.5px;width:87px"><span>HR</span></div>
<div class="c" style="left:267px;top:386.5px;width:69px"><span>12-May-24</span></div>
<div class="c" style="left:337px;top:386.5px;width:79px"><span>16-May-24</span></div>
<div class="c" style="left:417px;top:386.5px;width:63px"><span>New York</span></div>
<div class="c" style="left:481px;top:386.5px;width:102px"><span>Hotel</span></div>
<div class="c" style="left:584px;top:386.5px;width:88px"><span>1086</span></div>
<div class="c" style="left:673px;top:386.5px;width:79px"><span>Pending</span></div>
<div class="c" style="left:753px;top:386.5px;width:67px"><span>Jane Harper</span></div>
<div class="c" style="left:821px;top:386.5px;width:84px"><span>7-May-24</span></div>
<div class="c" style="left:1028px;top:386.5px;width:76px"><span>4</span></div>
<div class="c" style="left:1140px;top:386.5px;width:75px"><span>Yes</span></div>
<div class="c" style="left:1216px;top:386.5px;width:19px"><span>No</span></div>
<div class="c" style="left:1236px;top:386.5px;width:76px"><span>No</span></div>
<div class="c" style="left:35px;top:402.5px;width:67px"><span>105</span></div>
<div class="c" style="left:103px;top:402.5px;width:75px"><span>Joseph Hall</span></div>
<div class="c" style="left:179px;top:402.5px;width:87px"><span>HR</span></div>
<div class="c" style="left:267px;top:402.5px;width:69px"><span>12-Apr-24</span></div>
<div class="c" style="left:337px;top:402.5px;width:79px"><span>20-Apr-24</span></div>
<div class="c" style="left:417px;top:402.5px;width:63px"><span>New York</span></div>
<div class="c" style="left:481px;top:402.5px;width:102px"><span>Internet</span></div>
<div class="c" style="left:584px;top:402.5px;width:88px"><span>952</span></div>
<div class="c" style="left:673px;top:402.5px;width:79px"><span>Approved</span></div>
<div class="c" style="left:753px;top:402.5px;width:67px"><span>Mary Gomez</span></div>
<div class="c" style="left:821px;top:402.5px;width:84px"><span>10-Apr-24</span></div>
<div class="c" style="left:906px;top:402.5px;width:121px"><span>11-Apr-24</span></div>
<div class="c" style="left:1028px;top:402.5px;width:76px"><span>8</span></div>
<div class="c" style="left:1105px;top:402.5px;width:34px"><span>1</span></div>
<div class="c" style="left:1140px;top:402.5px;width:75px"><span>No</span></div>
<div class="c" style="left:1216px;top:402.5px;width:19px"><span>Yes</span></div>
<div class="c" style="left:1236px;top:402.5px;width:76px"><span>No</span></div>
<div class="c" style="left:35px;top:418.5px;width:67px"><span>113</span></div>
<div class="c" style="left:103px;top:418.5px;width:75px"><span>Matthew Williams</span></div>
<div class="c" style="left:179px;top:418.5px;width:87px"><span>HR</span></div>
<div class="c" style="left:267px;top:418.5px;width:69px"><span>16-Jan-24</span></div>
<div class="c" style="left:337px;top:418.5px;width:79px"><span>19-Jan-24</span></div>
<div class="c" style="left:417px;top:418.5px;width:63px"><span>Berlin</span></div>
<div class="c" style="left:481px;top:418.5px;width:102px"><span>Internet</span></div>
<div class="c" style="left:584px;top:418.5px;width:88px"><span>1128</span></div>
<div class="c" style="left:673px;top:418.5px;width:79px"><span>Rejected</span></div>
<div class="c" style="left:753px;top:418.5px;width:67px"><span>Wendy Warren</span></div>
<div class="c" style="left:821px;top:418.5px;width:84px"><span>13-Jan-24</span></div>
<div class="c" style="left:1028px;top:418.5px;width:76px"><span>3</span></div>
<div class="c" style="left:1140px;top:418.5px;width:75px"><span>Yes</span></div>
<div class="c" style="left:1216px;top:418.5px;width:19px"><span>No</span></div>
<div class="c" style="left:1236px;top:418.5px;width:76px"><span>No</span></div>
<div class="c" style="left:35px;top:434.5px;width:67px"><span>117</span></div>
<div class="c" style="left:103px;top:434.5px;width:75px"><span>Edward French</span></div>
<div class="c" style="left:179px;top:434.5px;width:87px"><span>HR</span></div>
<div class="c" style="left:267px;top:434.5px;width:69px"><span>9-Mar-24</span></div>
<div class="c" style="left:337px;top:434.5px;width:79px"><span>19-Mar-24</span></div>
<div class="c" style="left:417px;top:434.5px;width:63px"><span>New York</span></div>
<div class="c" style="left:481px;top:434.5px;width:102px"><span>Hotel</span></div>
<div class="c" style="left:584px;top:434.5px;width:88px"><span>716</span></div>
<div class="c" style="left:673px;top:434.5px;width:79px"><span>Rejected</span></div>
<div class="c" style="left:753px;top:434.5px;width:67px"><span>Kimberly Rodgers</span></div>
<div class="c" style="left:821px;top:434.5px;width:84px"><span>5-Mar-24</span></div>
<div class="c" style="left:1028px;top:434.5px;width:76px"><span>10</span></div>
<div class="c" style="left:1140px;top:434.5px;width:75px"><span>No</span></div>
<div class="c" style="left:1216px;top:434.5px;width:19px"><span>No</span></div>
<div class="c" style="left:1236px;top:434.5px;width:76px"><span>No</span></div>
<div class="c" style="left:35px;top:450.5px;width:67px"><span>122</span></div>
<div class="c" style="left:103px;top:450.5px;width:75px"><span>Danny Flores</span></div>
<div class="c" style="left:179px;top:450.5px;width:87px"><span>HR</span></div>
<div class="c" style="left:267px;top:450.5px;width:69px"><span>18-May-24</span></div>
<div class="c" style="left:337px;top:450.5px;width:79px"><span>26-May-24</span></div>
<div class="c" style="left:417px;top:450.5px;width:63px"><span>Dubai</span></div>
<div class="c" style="left:481px;top:450.5px;width:102px"><span>Flight</span></div>
<div class="c" style="left:584px;top:450.5px;width:88px"><span>298</span></div>
<div class="c" style="left:673px;top:450.5px;width:79px"><span>Pending</span></div>
<div class="c" style="left:753px;top:450.5px;width:67px"><span>Miguel Rogers</span></div>
<div class="c" style="left:821px;top:450.5px;width:84px"><span>13-May-24</span></div>
<div class="c" style="left:1028px;top:450.5px;width:76px"><span>8</span></div>
<div class="c" style="left:1140px;top:450.5px;width:75px"><span>No</span></div>
<div class="c" style="left:1216px;top:450.5px;width:19px"><span>No</span></div>
<div class="c" style="left:1236px;top:450.5px;width:76px"><span>No</span></div>
<div class="c" style="left:35px;top:466.5px;width:67px"><span>129</span></div>
<div class="c" style="left:103px;top:466.5px;width:75px"><span>Kara Johnson</span></div>
<div class="c" style="left:179px;top:466.5px;width:87px"><span>HR</span></div>
<div class="c" style="left:267px;top:466.5px;width:69px"><span>13-Mar-24</span></div>
<div class="c" style="left:337px;top:466.5px;width:79px"><span>18-Mar-24</span></div>
<div class="c" style="left:417px;top:466.5px;width:63px"><span>Singapore</span></div>
<div class="c" style="left:481px;top:466.5px;width:102px"><span>Internet</span></div>
<div class="c" style="left:584px;top:466.5px;width:88px"><span>1498</span></div>
<div class="c" style="left:673px;top:466.5px;width:79px"><span>Pending</span></div>
<div class="c" style="left:753px;top:466.5px;width:67px"><span>Donna Atkins</span></div>
<div class="c" style="left:821px;top:466.5px;width:84px"><span>11-Mar-24</span></div>
<div class="c" style="left:1028px;top:466.5px;width:76px"><span>5</span></div>
<div class="c" style="left:1140px;top:466.5px;width:75px"><span>Yes</span></div>
<div class="c" style="left:1216px;top:466.5px;width:19px"><span>No</span></div>
<div class="c" style="left:1236px;top:466.5px;width:76px"><span>Yes</span></div>
<div class="c" style="left:35px;top:482.5px;width:67px"><span>135</span></div>
<div class="c" style="left:103px;top:482.5px;width:75px"><span>Brian Fitzgerald</span></div>
<div class="c" style="left:179px;top:482.5px;width:87px"><span>HR</span></div>
<div class="c" style="left:267px;top:482.5px;width:69px"><span>30-Apr-24</span></div>
<div class="c" style="left:337px;top:482.5px;width:79px"><span>5-May-24</span></div>
<div class="c" style="left:417px;top:482.5px;width:63px"><span>Berlin</span></div>
<div class="c" style="left:481px;top:482.5px;width:102px"><span>Internet</span></div>
<div class="c" style="left:584px;top:482.5px;width:88px"><span>1045</span></div>
<div class="c" style="left:673px;top:482.5px;width:79px"><span>Rejected</span></div>
<div class="c" style="left:753px;top:482.5px;width:67px"><span>Mr. Justin Green III</span></div>
<div class="c" style="left:821px;top:482.5px;width:84px"><span>29-Apr-24</span></div>
<div class="c" style="left:1028px;top:482.5px;width:76px"><span>5</span></div>
<div class="c" style="left:1140px;top:482.5px;width:75px"><span>Yes</span></div>
<div class="c" style="left:1216px;top:482.5px;width:19px"><span>No</span></div>
<div class="c" style="left:1236px;top:482.5px;width:76px"><span>No</span></div>
<div class="c" style="left:35px;top:498.5px;width:67px"><span>137</span></div>
<div class="c" style="left:103px;top:498.5px;width:75px"><span>Michael Graves</span></div>
<div class="c" style="left:179px;top:498.5px;width:87px"><span>HR</span></div>
<div class="c" style="left:267px;top:498.5px;width:69px"><span>18-Jan-24</span></div>
<div class="c" style="left:337px;top:498.5px;width:79px"><span>22-Jan-24</span></div>
<div class="c" style="left:417px;top:498.5px;width:63px"><span>Sydney</span></div>
<div class="c" style="left:481px;top:498.5px;width:102px"><span>Miscellaneous</span></div>
<div class="c" style="left:584px;top:498.5px;width:88px"><span>1383</span></div>
<div class="c" style="left:673px;top:498.5px;width:79px"><span>Approved</span></div>
<div class="c" style="left:753px;top:498.5px;width:67px"><span>Isaiah Walker</span></div>
<div class="c" style="left:821px;top:498.5px;width:84px"><span>17-Jan-24</span></div>
<div class="c" style="left:906px;top:498.5px;width:121px"><span>19-Jan-24</span></div>
<div class="c" style="left:1028px;top:498.5px;width:76px"><span>4</span></div>
<div class="c" style="left:1105px;top:498.5px;width:34px"><span>2</span></div>
<div class="c" style="left:1140px;top:498.5px;width:75px"><span>Yes</span></div>
<div class="c" style="left:1216px;top:498.5px;width:19px"><span>Yes</span></div>
<div class="c" style="left:1236px;top:498.5px;width:76px"><span>Yes</span></div>
<svg style="left:1210px;top:60px" width="32" height="34" viewBox="1210 122 32 34"><rect x="1215.800" y="128.250" width="19.600" height="20.600" fill="none" stroke="#4478cc" stroke-width="1.500"/><circle cx="1235.500" cy="149.600" r="3.600" fill="#fff"/><circle cx="1235.500" cy="149.600" r="3" fill="#1a5acb"/></svg>
<div style="left:1273px;top:1px;width:7px;height:510px;background:#fff;border-left:1px solid #e3e3e3"></div>
<div style="left:1276px;top:20.500px;width:8px;height:19.500px;border-radius:4px;background:#dfe1e5"></div>
<div style="left:1273px;top:487px;width:7px;height:11px;border:1px solid #e3e3e3;border-right:none;background:#fff"></div>
<div style="left:1273px;top:499px;width:7px;height:11px;border:1px solid #e3e3e3;border-right:none;background:#fff"></div>
<svg style="left:1276px;top:491px" width="4" height="3" viewBox="0 0 4 3"><path d="M0 3h4L2 0z" fill="#9aa0a6"/></svg>
<svg style="left:1276px;top:504px" width="4" height="3" viewBox="0 0 4 3"><path d="M0 0h4L2 3z" fill="#9aa0a6"/></svg>
</div>
</body></html>
